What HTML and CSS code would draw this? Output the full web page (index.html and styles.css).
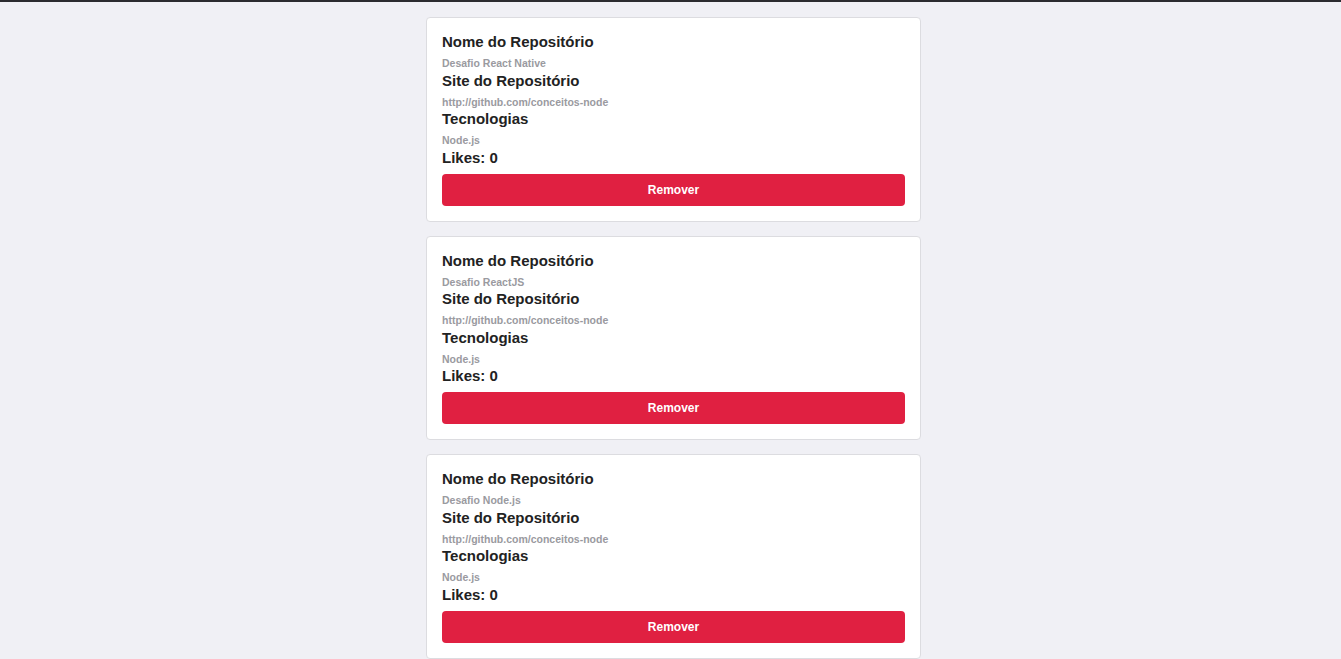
FILE: index.html
```html
<!DOCTYPE html>
<html lang="pt-BR">
<head>
<meta charset="utf-8">
<title>Repositórios</title>
<link rel="stylesheet" href="styles.css">
</head>
<body>
<div class="topbar"></div>
<main class="list">
  <section class="card">
    <h2 class="label">Nome do Repositório</h2>
    <p class="value">Desafio React Native</p>
    <h2 class="label">Site do Repositório</h2>
    <p class="value">http://github.com/conceitos-node</p>
    <h2 class="label">Tecnologias</h2>
    <p class="value">Node.js</p>
    <h2 class="label likes">Likes: 0</h2>
    <button class="remove">Remover</button>
  </section>
  <section class="card">
    <h2 class="label">Nome do Repositório</h2>
    <p class="value">Desafio ReactJS</p>
    <h2 class="label">Site do Repositório</h2>
    <p class="value">http://github.com/conceitos-node</p>
    <h2 class="label">Tecnologias</h2>
    <p class="value">Node.js</p>
    <h2 class="label likes">Likes: 0</h2>
    <button class="remove">Remover</button>
  </section>
  <section class="card">
    <h2 class="label">Nome do Repositório</h2>
    <p class="value">Desafio Node.js</p>
    <h2 class="label">Site do Repositório</h2>
    <p class="value">http://github.com/conceitos-node</p>
    <h2 class="label">Tecnologias</h2>
    <p class="value">Node.js</p>
    <h2 class="label likes">Likes: 0</h2>
    <button class="remove">Remover</button>
  </section>
</main>
</body>
</html>
```
FILE: styles.css
```css
html, body {
  margin: 0;
  padding: 0;
  background: #f0f0f5;
  font-family: "Liberation Sans", Arial, sans-serif;
  overflow: hidden;
}
.topbar {
  height: 2px;
  background: #2b2b30;
}
.list {
  display: flex;
  flex-direction: column;
  align-items: center;
  gap: 14px;
  padding-top: 15px;
  padding-left: 6px;
}
.card {
  box-sizing: border-box;
  width: 495px;
  background: #fff;
  border: 1px solid #dcdce0;
  border-radius: 4px;
  padding: 15px;
  display: flex;
  flex-direction: column;
}
.label {
  margin: 0;
  font-size: 15px;
  line-height: 18px;
  font-weight: bold;
  color: #222;
}
.value {
  margin: 4px 0 0.5px;
  font-size: 10.5px;
  line-height: 16px;
  font-weight: bold;
  color: #9a9a9f;
}
.remove {
  margin-top: 7px;
  height: 32px;
  border: 0;
  border-radius: 4px;
  background: #e02041;
  color: #fff;
  font-family: "Liberation Sans", Arial, sans-serif;
  font-size: 12px;
  font-weight: bold;
  cursor: pointer;
}
```
